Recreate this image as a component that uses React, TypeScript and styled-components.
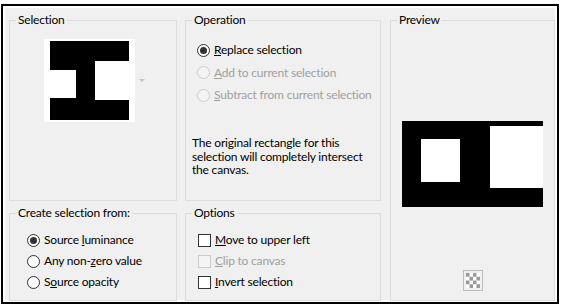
import React from 'react';
import styled, { createGlobalStyle } from 'styled-components';

const GlobalStyle = createGlobalStyle`
  html, body {
    margin: 0;
    padding: 0;
    background: #ffffff;
  }
  body {
    font-family: Lato, "Noto Sans", sans-serif;
    font-size: 12px;
    letter-spacing: -0.2px;
    color: #000;
  }
`;

const Frame = styled.div`
  box-sizing: border-box;
  margin: 4px 0 0 1px;
  width: 558px;
  height: 300px;
  border: 2px solid #000;
  box-shadow: inset 0 0 0 2px #fff;
  background: #f0f0f0;
  padding: 6px 0 0 6px;
`;

const Layout = styled.div`
  display: grid;
  grid-template-columns: 168px 196px 166px;
  grid-template-rows: 189px 96px;
  column-gap: 8px;
  row-gap: 4px;
`;

const Group = styled.fieldset<{ $span?: boolean }>`
  box-sizing: border-box;
  margin: 0 0 0 ${(p) => (p.$span ? '1px' : '0')};
  min-width: 0;
  height: 100%;
  padding: 0;
  border: 1px solid #dcdcdc;
  grid-row: ${(p) => (p.$span ? '1 / 3' : 'auto')};
  grid-column: ${(p) => (p.$span ? '3' : 'auto')};
  display: flex;
  flex-direction: column;
`;

const Legend = styled.legend`
  margin-left: 6px;
  padding: 0 2px;
  line-height: 16px;
  font-size: 12px;
`;

const ThumbRow = styled.div`
  display: flex;
  align-items: center;
  padding-left: 34px;
  margin-top: 11px;
`;

const DropArrow = styled.span`
  margin-left: 4px;
  width: 0;
  height: 0;
  border-left: 3px solid transparent;
  border-right: 3px solid transparent;
  border-top: 3px solid #c4c4c4;
`;

const OptionList = styled.div<{ $top: number; $gap: number; $indent: number }>`
  display: flex;
  flex-direction: column;
  gap: ${(p) => p.$gap}px;
  margin-top: ${(p) => p.$top}px;
  padding-left: ${(p) => p.$indent}px;
`;

const OptionRow = styled.label<{ $disabled?: boolean }>`
  display: flex;
  align-items: center;
  gap: 4px;
  height: 16px;
  line-height: 16px;
  color: ${(p) => (p.$disabled ? '#a0a0a0' : '#000')};
  white-space: nowrap;
`;

const RadioMark = styled.span<{ $checked?: boolean; $disabled?: boolean }>`
  box-sizing: border-box;
  position: relative;
  width: 13px;
  height: 13px;
  border-radius: 50%;
  border: 1px solid ${(p) => (p.$disabled ? '#cccccc' : '#333333')};
  background: ${(p) => (p.$disabled ? '#f4f4f4' : '#ffffff')};
  flex: none;
  &::after {
    content: '';
    display: ${(p) => (p.$checked ? 'block' : 'none')};
    position: absolute;
    left: 2px;
    top: 2px;
    width: 7px;
    height: 7px;
    border-radius: 50%;
    background: #333333;
  }
`;

const CheckMark = styled.span<{ $disabled?: boolean }>`
  box-sizing: border-box;
  width: 13px;
  height: 13px;
  border: 1px solid ${(p) => (p.$disabled ? '#cccccc' : '#333333')};
  background: ${(p) => (p.$disabled ? '#f4f4f4' : '#ffffff')};
  flex: none;
`;

const Note = styled.p`
  margin: 33px 0 0 0;
  padding-left: 6px;
  line-height: 13.5px;
  font-size: 12px;
  white-space: nowrap;
`;

const PreviewArea = styled.div`
  flex: 1;
  display: flex;
  flex-direction: column;
  align-items: center;
`;

const PreviewImage = styled.svg`
  display: block;
  margin-top: 93px;
`;

const CheckerButton = styled.button`
  margin-top: 63px;
  width: 20px;
  height: 21px;
  padding: 0;
  border: none;
  background: transparent;
  display: flex;
  align-items: center;
  justify-content: center;
`;

const SelectionThumb = () => (
  <svg width="91" height="83" viewBox="0 0 91 83">
    <rect x="0" y="0" width="91" height="83" fill="#fff" />
    <rect x="6" y="2" width="79" height="79" fill="#000" />
    <rect x="0" y="31" width="32" height="28" fill="#fff" />
    <rect x="51" y="22" width="40" height="39" fill="#fff" />
  </svg>
);

const CheckerIcon = () => (
  <svg width="20" height="21" viewBox="0 0 20 21">
    <rect x="0.5" y="0.5" width="19" height="20" fill="#f0f0f0" stroke="#bdbdbd" />
    <rect x="3" y="3" width="14" height="15" fill="#fff" />
    {[0, 1, 2, 3].map((r) =>
      [0, 1, 2, 3].map((c) =>
        (r + c) % 2 === 0 ? (
          <rect key={`${r}-${c}`} x={3 + c * 3.5} y={3 + r * 3.75} width="3.5" height="3.75" fill="#9a9a9a" />
        ) : null
      )
    )}
  </svg>
);

const App = () => (
  <>
    <GlobalStyle />
    <Frame>
      <Layout>
        <Group>
          <Legend>Selection</Legend>
          <ThumbRow>
            <SelectionThumb />
            <DropArrow />
          </ThumbRow>
        </Group>

        <Group>
          <Legend>Operation</Legend>
          <OptionList $top={14} $gap={6.5} $indent={11}>
            <OptionRow>
              <RadioMark $checked />
              <span><u>R</u>eplace selection</span>
            </OptionRow>
            <OptionRow $disabled>
              <RadioMark $disabled />
              <span><u>A</u>dd to current selection</span>
            </OptionRow>
            <OptionRow $disabled>
              <RadioMark $disabled />
              <span><u>S</u>ubtract from current selection</span>
            </OptionRow>
          </OptionList>
          <Note>
            The original rectangle for this
            <br />
            selection will completely intersect
            <br />
            the canvas.
          </Note>
        </Group>

        <Group $span>
          <Legend>Preview</Legend>
          <PreviewArea>
            <PreviewImage width="141" height="86" viewBox="0 0 141 86">
              <rect x="0" y="0" width="141" height="86" fill="#000" />
              <rect x="19" y="18" width="39" height="43" fill="#fff" />
              <rect x="88" y="5" width="53" height="62" fill="#fff" />
            </PreviewImage>
            <CheckerButton type="button" aria-label="Background">
              <CheckerIcon />
            </CheckerButton>
          </PreviewArea>
        </Group>

        <Group>
          <Legend>Create selection from:</Legend>
          <OptionList $top={11} $gap={5} $indent={17}>
            <OptionRow>
              <RadioMark $checked />
              <span>Source <u>l</u>uminance</span>
            </OptionRow>
            <OptionRow>
              <RadioMark />
              <span>Any non-<u>z</u>ero value</span>
            </OptionRow>
            <OptionRow>
              <RadioMark />
              <span>S<u>o</u>urce opacity</span>
            </OptionRow>
          </OptionList>
        </Group>

        <Group>
          <Legend>Options</Legend>
          <OptionList $top={11} $gap={5} $indent={12}>
            <OptionRow>
              <CheckMark />
              <span><u>M</u>ove to upper left</span>
            </OptionRow>
            <OptionRow $disabled>
              <CheckMark $disabled />
              <span><u>C</u>lip to canvas</span>
            </OptionRow>
            <OptionRow>
              <CheckMark />
              <span><u>I</u>nvert selection</span>
            </OptionRow>
          </OptionList>
        </Group>
      </Layout>
    </Frame>
  </>
);

export default App;
